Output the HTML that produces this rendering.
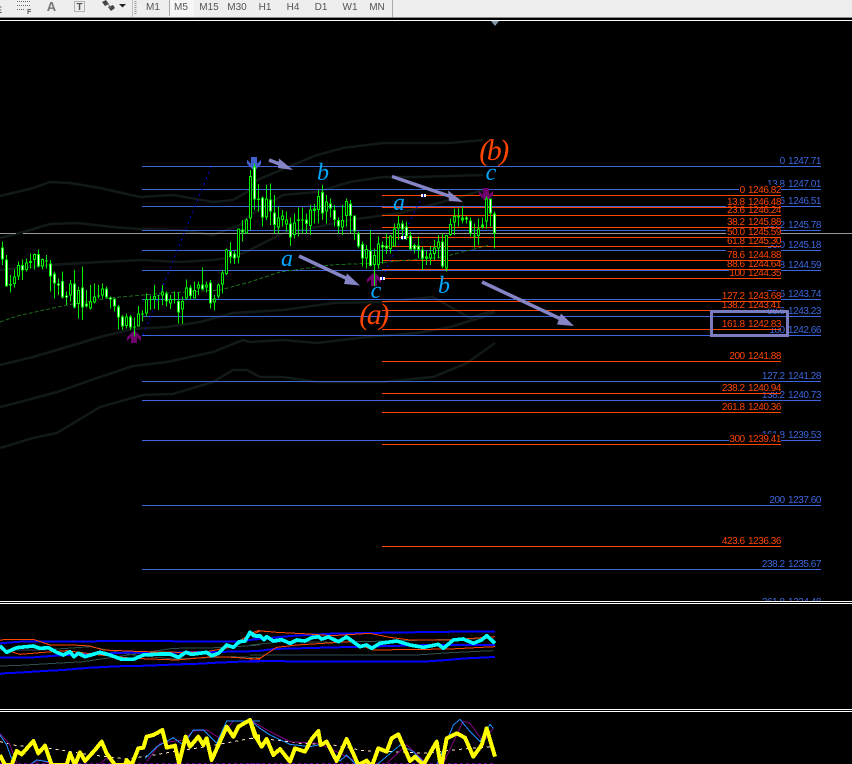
<!DOCTYPE html>
<html><head><meta charset="utf-8"><style>
html,body{margin:0;padding:0;background:#000;width:852px;height:764px;overflow:hidden}
svg{display:block;position:absolute;left:0;top:0}
text{font-family:"Liberation Sans",sans-serif}
.t{font-size:10px;fill:#555;text-anchor:middle}
.bl{font-size:10px;letter-spacing:-.45px;word-spacing:1px;fill:#3d66dc;text-anchor:end}
.rd{font-size:10px;letter-spacing:-.45px;word-spacing:1px;fill:#ff4500;text-anchor:end}
.w{font-family:"Liberation Serif",serif;font-style:italic;font-size:24px;fill:#00a6ff;text-anchor:middle}
.W{font-family:"Liberation Serif",serif;font-style:italic;font-size:30px;letter-spacing:-2.5px;fill:#ff4500;text-anchor:middle}
.f{fill:none;stroke:#111a16;stroke-width:2.5}
</style></head><body>
<svg width="852" height="764" viewBox="0 0 852 764" xmlns="http://www.w3.org/2000/svg">
<rect width="852" height="764" fill="#000"/>
<!-- faint bands -->
<polyline class="f" points="0,196 33,188 50,182 70,183 100,188 140,197 173,195 213,202 233,200 247,192 257,180 293,165 317,155 343,148 383,143 417,143 450,143 483,140"/>
<polyline class="f" points="0,238 20,233 50,224 77,223 113,227 140,229 180,230 213,235 240,225 250,215 283,195 317,192 350,182 383,177 417,177 450,176 483,175"/>
<polyline class="f" points="0,270 20,268 50,265 100,262 143,260 180,262 213,260 233,257 250,250 283,233 317,227 350,220 400,213 450,200 483,190"/>
<polyline class="f" points="0,365 33,357 67,347 100,337 133,329 167,327 200,322 233,313 250,312 283,310 333,303 383,302 433,297 470,318 495,310"/>
<polyline class="f" points="0,407 20,402 57,392 100,377 133,366 167,362 213,352 243,340 250,342 283,340 317,343 367,337 417,333 450,327 483,317 495,312"/>
<polyline class="f" points="0,448 33,438 57,433 100,407 143,395 173,394 213,382 233,370 247,370 260,377 283,377 317,382 383,382 433,377 467,363 495,343"/>
<!-- grey line -->
<rect x="0" y="233" width="16" height="1" fill="#999"/><rect x="23" y="233" width="829" height="1" fill="#999"/>
<!-- blue fib lines -->
<g fill="#3d66dc">
<rect x="142" y="166" width="679" height="1"/><rect x="142" y="189" width="679" height="1"/><rect x="142" y="206" width="679" height="1"/><rect x="142" y="230" width="679" height="1"/><rect x="142" y="250" width="679" height="1"/><rect x="142" y="270" width="679" height="1"/><rect x="142" y="299" width="679" height="1"/><rect x="142" y="316" width="679" height="1"/><rect x="142" y="335" width="679" height="1"/><rect x="142" y="381" width="679" height="1"/><rect x="142" y="400" width="679" height="1"/><rect x="142" y="440" width="679" height="1"/><rect x="142" y="505" width="679" height="1"/><rect x="142" y="569" width="679" height="1"/>
</g>
<g class="lb">
<text class="bl" x="821" y="164">0 1247.71</text>
<text class="bl" x="821" y="187">13.8 1247.01</text>
<text class="bl" x="821" y="204">23.6 1246.51</text>
<text class="bl" x="821" y="228">38.2 1245.78</text>
<text class="bl" x="821" y="248">50.0 1245.18</text>
<text class="bl" x="821" y="268">61.8 1244.59</text>
<text class="bl" x="821" y="297">78.6 1243.74</text>
<text class="bl" x="821" y="314">88.6 1243.23</text>
<text class="bl" x="821" y="333">100 1242.66</text>
<text class="bl" x="821" y="379">127.2 1241.28</text>
<text class="bl" x="821" y="398">138.2 1240.73</text>
<text class="bl" x="821" y="438">161.8 1239.53</text>
<text class="bl" x="821" y="503">200 1237.60</text>
<text class="bl" x="821" y="567">238.2 1235.67</text>
<text class="bl" x="821" y="605">261.8 1234.48</text>
</g>
<!-- red fib: label boxes -->
<g fill="#000">
<rect x="739" y="185" width="42" height="9"/><rect x="726" y="197" width="55" height="9"/><rect x="726" y="206" width="55" height="8"/><rect x="726" y="217" width="55" height="9"/><rect x="726" y="227" width="55" height="9"/><rect x="726" y="236" width="55" height="9"/><rect x="726" y="250" width="55" height="9"/><rect x="726" y="259" width="55" height="9"/><rect x="729" y="268" width="52" height="9"/><rect x="721" y="291" width="60" height="9"/><rect x="721" y="301" width="60" height="8"/><rect x="721" y="319" width="60" height="9"/><rect x="729" y="351" width="52" height="9"/><rect x="721" y="383" width="60" height="9"/><rect x="721" y="402" width="60" height="9"/><rect x="729" y="434" width="52" height="9"/><rect x="721" y="536" width="60" height="9"/>
</g>
<g>
<text class="rd" x="781" y="193">0 1246.82</text>
<text class="rd" x="781" y="205">13.8 1246.48</text>
<text class="rd" x="781" y="213">23.6 1246.24</text>
<text class="rd" x="781" y="225">38.2 1245.88</text>
<text class="rd" x="781" y="235">50.0 1245.59</text>
<text class="rd" x="781" y="244">61.8 1245.30</text>
<text class="rd" x="781" y="258">78.6 1244.88</text>
<text class="rd" x="781" y="267">88.6 1244.64</text>
<text class="rd" x="781" y="276">100 1244.35</text>
<text class="rd" x="781" y="299">127.2 1243.68</text>
<text class="rd" x="781" y="308">138.2 1243.41</text>
<text class="rd" x="781" y="327">161.8 1242.83</text>
<text class="rd" x="781" y="359">200 1241.88</text>
<text class="rd" x="781" y="391">238.2 1240.94</text>
<text class="rd" x="781" y="410">261.8 1240.36</text>
<text class="rd" x="781" y="442">300 1239.41</text>
<text class="rd" x="781" y="544">423.6 1236.36</text>
</g>
<g fill="#ff4500">
<rect x="382" y="195" width="399" height="1"/><rect x="382" y="207" width="399" height="1"/><rect x="382" y="215" width="399" height="1"/><rect x="382" y="227" width="399" height="1"/><rect x="382" y="237" width="399" height="1"/><rect x="382" y="246" width="399" height="1"/><rect x="382" y="260" width="399" height="1"/><rect x="382" y="269" width="399" height="1"/><rect x="382" y="278" width="399" height="1"/><rect x="382" y="301" width="399" height="1"/><rect x="382" y="310" width="399" height="1"/><rect x="382" y="329" width="399" height="1"/><rect x="382" y="361" width="399" height="1"/><rect x="382" y="393" width="399" height="1"/><rect x="382" y="412" width="399" height="1"/><rect x="382" y="444" width="399" height="1"/><rect x="382" y="546" width="399" height="1"/>
</g>
<!-- fib anchor dotted -->
<g fill="none" stroke="#0000d8" stroke-width="1" stroke-dasharray="2 4" shape-rendering="crispEdges">
<line x1="143" y1="335" x2="211" y2="167"/><line x1="382" y1="278" x2="423" y2="195"/>
</g>
<!-- green MA -->
<polyline fill="none" stroke="#1c6a1c" stroke-width="1" stroke-dasharray="4 2" shape-rendering="crispEdges" points="0,322 17,316 67,305 110,298 167,293 220,290 250,282 280,272 330,265 377,263 443,257 490,245"/>
<!-- arrows markers -->
<g shape-rendering="crispEdges">
<path fill="#70006e" d="M134 330L141 337V341L137 337.5V343H131V337.5L127 341V337Z"/>
<path fill="#70006e" d="M374 272L381 279V283L377 279.5V286H371V279.5L367 283V279Z"/>
<path fill="#70006e" d="M486 202L493 195V191L489 194.5V188H483V194.5L479 191V195Z"/>
<path fill="#3f5fcc" d="M254 171L261 164V160L257 163.5V157H251V163.5L247 160V164Z"/>
</g>
<!-- candles left -->
<g transform="translate(0,230) scale(.33334)" fill="none" shape-rendering="crispEdges">
<path stroke="#00ee00" stroke-width="3" d="M7.5 35V105M19.5 75V170M31.5 135V188M43.5 118V172M55.5 95V150M67.5 88V150M79.5 85V125M91.5 70V115M103.5 70V118M115.5 58V112M127.5 85V118M139.5 75V115M151.5 90V185M163.5 125V205M175.5 145V195M187.5 125V205M199.5 185V225M211.5 150V215M223.5 120V235M235.5 170V265M247.5 110V270M259.5 180V232M271.5 165V238M283.5 160V220M295.5 165V205M307.5 160V205M319.5 170V205M331.5 200V235M343.5 205V245M355.5 225V298M367.5 255V300M379.5 250V295M391.5 255V300M403.5 262V320M415.5 228V290M427.5 242V275M439.5 190V260M451.5 197V240M463.5 165V237M475.5 195V240M487.5 165V225M499.5 185V230M511.5 195V237M523.5 185V220M535.5 187V280M547.5 200V282M559.5 148V208M571.5 165V208M583.5 155V205M595.5 155V195M607.5 112V180M619.5 155V188M631.5 150V235M643.5 195V242M655.5 160V205M667.5 120V190M679.5 55V135"/>
<path stroke="#00ee00" stroke-width="9" d="M7.5 52V88M19.5 88V170M31.5 162V167M43.5 140V162M55.5 105V140M67.5 105V122M79.5 97V120M91.5 93V99M103.5 72V90M115.5 72V110M127.5 87V110M139.5 92V95M151.5 100V140M163.5 130V160M175.5 160V167M187.5 153V203M199.5 196V203M211.5 160V197M223.5 160V232M235.5 180V222M247.5 172V232M259.5 220V230M271.5 215V235M283.5 200V217M295.5 196V200M307.5 176V197M319.5 176V203M331.5 203V208M343.5 205V230M355.5 230V262M367.5 260V290M379.5 260V288M391.5 260V292M403.5 290V293M415.5 250V290M427.5 250V253M439.5 207V250M451.5 207V210M463.5 198V208M475.5 195V197M487.5 185V197M499.5 190V215M511.5 207V220M523.5 207V210M535.5 213V247M547.5 213V238M559.5 172V205M571.5 172V198M583.5 180V205M595.5 163V176M607.5 163V178M619.5 163V173M631.5 157V220M643.5 205V217M655.5 163V200M667.5 127V163M679.5 58V132"/>
<path stroke="#fff" stroke-width="3" d="M7.5 55V85M19.5 91V167M67.5 108V119M115.5 75V107M151.5 103V137M163.5 133V157M175.5 162V165M187.5 156V200M199.5 198V201M223.5 163V229M247.5 175V229M259.5 223V227M319.5 179V200M331.5 204V207M343.5 208V227M355.5 233V259M367.5 263V287M391.5 263V289M499.5 193V212M535.5 216V244M571.5 175V195M607.5 166V175M631.5 160V217"/>
<path stroke="#000" stroke-width="3" d="M43.5 143V159M55.5 108V137M79.5 100V117M103.5 75V87M127.5 90V107M211.5 163V194M235.5 183V219M271.5 218V232M283.5 203V214M307.5 179V194M379.5 263V285M415.5 253V287M439.5 210V247M463.5 201V205M487.5 188V194M511.5 210V217M547.5 216V235M559.5 175V202M583.5 183V202M595.5 166V173M619.5 166V170M643.5 208V214M655.5 166V197M667.5 130V160M679.5 61V129"/>
</g>
<!-- candles right -->
<g transform="translate(230,130) scale(.33334)" fill="none" shape-rendering="crispEdges">
<path stroke="#00ee00" stroke-width="3" d="M1.5 336V400M13.5 363V402M25.5 295V400M37.5 270V335M49.5 265V312M61.5 120V300M73.5 100V240M85.5 162V245M97.5 200V290M109.5 165V270M121.5 160V285M133.5 195V310M145.5 230V310M157.5 240V290M169.5 245V305M181.5 262V348M193.5 250V325M205.5 232V320M217.5 232V310M229.5 250V310M241.5 225V315M253.5 222V280M265.5 180V280M277.5 165V270M289.5 195V280M301.5 205V262M313.5 225V290M325.5 262V310M337.5 225V315M349.5 205V290M361.5 210V310M373.5 256V330M385.5 305V355M397.5 335V410M409.5 345V415M421.5 300V410M433.5 355V470M445.5 320V415M457.5 335V400M469.5 310V372M481.5 315V370M493.5 280V350M505.5 258V330M517.5 272V330M529.5 275V330M541.5 305V362M553.5 340V370M565.5 320V385M577.5 350V420M589.5 360V405M601.5 348V405M613.5 330V390M625.5 315V385M637.5 310V415M649.5 315V425M661.5 265V318M673.5 235V315M685.5 235V290M697.5 230V280M709.5 258V280M721.5 262V320M733.5 280V352M745.5 265V345M757.5 262V295M769.5 200V295M781.5 205V290M793.5 245V355"/>
<path stroke="#00ee00" stroke-width="9" d="M1.5 363V381M13.5 370V385M25.5 295V382M37.5 298V308M49.5 268V310M61.5 138V265M73.5 110V208M85.5 205V210M97.5 202V262M109.5 205V262M121.5 208V245M133.5 248V285M145.5 262V292M157.5 256V270M169.5 268V283M181.5 280V322M193.5 278V315M205.5 268V273M217.5 268V271M229.5 268V282M241.5 238V288M253.5 236V243M265.5 198V240M277.5 186V250M289.5 215V245M301.5 220V235M313.5 240V270M325.5 270V290M337.5 270V292M349.5 213V258M361.5 220V258M373.5 256V305M385.5 310V350M397.5 342V385M409.5 357V385M421.5 362V408M433.5 375V405M445.5 340V405M457.5 345V352M469.5 347V355M481.5 316V357M493.5 295V350M505.5 280V295M517.5 280V298M529.5 290V320M541.5 316V358M553.5 345V358M565.5 346V360M577.5 358V385M589.5 380V385M601.5 370V385M613.5 352V372M625.5 335V355M637.5 335V410M649.5 315V415M661.5 282V315M673.5 258V278M685.5 258V262M697.5 262V272M709.5 262V268M721.5 272V310M733.5 316V320M745.5 295V318M757.5 283V292M769.5 205V275M781.5 205V250M793.5 250V310"/>
<path stroke="#fff" stroke-width="3" d="M1.5 366V378M13.5 373V382M37.5 301V305M73.5 113V205M97.5 205V259M121.5 211V242M133.5 251V282M181.5 283V319M229.5 271V279M277.5 189V247M301.5 223V232M313.5 243V267M325.5 273V287M361.5 223V255M373.5 259V302M385.5 313V347M397.5 345V382M421.5 365V405M457.5 347V350M469.5 349V353M517.5 283V295M529.5 293V317M541.5 319V355M553.5 348V355M565.5 349V357M577.5 361V382M637.5 338V407M709.5 264V266M721.5 275V307M781.5 208V247M793.5 253V307"/>
<path stroke="#000" stroke-width="3" d="M25.5 298V379M49.5 271V307M61.5 141V262M109.5 208V259M145.5 265V289M157.5 259V267M169.5 271V280M193.5 281V312M241.5 241V285M265.5 201V237M289.5 218V242M337.5 273V289M349.5 216V255M409.5 360V382M433.5 378V402M445.5 343V402M481.5 319V354M493.5 298V347M505.5 283V292M601.5 373V382M613.5 355V369M625.5 338V352M649.5 318V412M661.5 285V312M673.5 261V275M745.5 298V315M769.5 208V272"/>
</g>
<!-- anchor squares -->
<g shape-rendering="crispEdges">
<rect x="380" y="277" width="5" height="3" fill="#fff"/><rect x="382" y="277" width="1" height="3" fill="#00d"/>
<rect x="421" y="194" width="5" height="3" fill="#fff"/><rect x="423" y="194" width="1" height="3" fill="#00d"/>
<rect x="401" y="236" width="5" height="3" fill="#fff"/><rect x="403" y="236" width="1" height="3" fill="#00d"/>
</g>
<!-- trend arrows -->
<g fill="#8585c5" stroke="#8585c5" stroke-linejoin="miter">
<line x1="269" y1="160" x2="285" y2="166" stroke-width="3.5"/><path stroke="none" d="M293 170L279 158.500L278 168Z"/>
<line x1="392" y1="176.500" x2="452" y2="197" stroke-width="3.500"/><path stroke="none" d="M463 202L448 190.500L449 201Z"/>
<line x1="299" y1="256" x2="350" y2="280" stroke-width="3.500"/><path stroke="none" d="M360 285.500L347 273.500L344 284Z"/>
<line x1="482" y1="282" x2="563" y2="320" stroke-width="3.500"/><path stroke="none" d="M574 326L561 313.500L557 324.500Z"/>
</g>
<rect x="711.5" y="311.5" width="76" height="24" fill="none" stroke="#7b7bc0" stroke-width="3" shape-rendering="crispEdges"/>
<!-- wave labels -->
<text class="w" x="323" y="180">b</text><text class="w" x="491" y="180">c</text><text class="w" x="399" y="210">a</text>
<text class="w" x="287" y="266">a</text><text class="w" x="376" y="298">c</text><text class="w" x="444" y="293">b</text>
<text class="W" x="493" y="160">(b)</text><text class="W" x="373" y="324">(a)</text>
<!-- panels -->
<rect x="0" y="601" width="852" height="163" fill="#000"/>
<rect x="0" y="601" width="852" height="1" fill="#fff"/><rect x="0" y="603" width="852" height="1" fill="#fff"/>
<rect x="0" y="709" width="852" height="1" fill="#fff"/><rect x="0" y="711" width="852" height="1" fill="#fff"/>
<g transform="translate(0,595) scale(.33334)" fill="none" shape-rendering="crispEdges">
<path stroke="#2f4f4f" stroke-width="3" d="M0 213L60 211L130 207L250 200L350 185L520 160L660 158L780 150M0 165L130 165L270 155L400 180L520 192L700 185L780 188"/>
<path stroke="#00f" stroke-width="6" d="M0 237L10 235L70 232L130 228L190 225L270 218L350 214L440 212L540 208L600 206L650 203L720 200L780 199M0 145L60 140L110 140L400 138L720 140L780 130M0 188L100 187L180 181L300 176L400 172L530 172L700 170L780 168"/>
<path stroke="#ff4500" stroke-width="3" d="M0 136L15 133L100 133L150 150L220 150L270 153L310 165L430 170L540 172L620 170L700 155L730 130L780 108M0 160L60 178L120 173L200 167L300 180L400 190L530 195L640 185L700 187L780 193"/>
<path stroke="#0ff" stroke-width="11" stroke-linejoin="round" d="M0 152L20 172L50 158L100 153L120 160L145 158L170 172L190 180L210 170L222 185L235 175L255 185L300 172L330 180L365 193L400 193L430 180L480 177L510 177L535 187L558 172L575 178L620 172L635 182L655 175L680 150L700 157L718 140L735 138L750 112L760 122L780 125"/>
</g>
<g transform="translate(250,595) scale(.33334)" fill="none" shape-rendering="crispEdges">
<path stroke="#2f4f4f" stroke-width="3" d="M0 180L80 180L500 180L600 173L730 167M0 150L100 140L250 142L730 130"/>
<path stroke="#00f" stroke-width="6" d="M0 198L75 198L155 200L520 200L590 195L650 190L735 186M0 135L100 125L135 122L245 116L410 113L615 110L735 110M0 168L25 168L70 162L220 158L540 150L735 150"/>
<path stroke="#ff4500" stroke-width="3" d="M0 115L25 107L80 112L160 116L245 122L360 115L420 127L480 135L600 135L735 125M0 193L30 190L80 157L140 150L300 140L370 165L600 162L735 155"/>
<path stroke="#0ff" stroke-width="11" stroke-linejoin="round" d="M0 112L15 122L30 122L42 134L50 125L70 138L95 134L120 145L140 135L165 138L185 128L205 125L215 132L235 126L265 140L290 126L330 155L350 150L365 160L390 145L440 138L480 150L520 157L565 148L580 160L610 135L640 132L670 145L695 135L710 122L735 145"/>
</g>
<g transform="translate(0,595) scale(.33334)" fill="none" shape-rendering="crispEdges">
<path stroke="#660099" stroke-width="3" stroke-dasharray="9 9" d="M0 505H780"/>
<path stroke="#ffe4c4" stroke-width="3" stroke-dasharray="9 12" d="M0 440L50 452L150 460L260 478L380 492L450 482L520 470L600 458L700 440L780 425"/>
<path stroke="#800080" stroke-width="3" d="M0 415L30 450L50 505M100 505L120 495L150 505M300 505L320 490L345 505M440 500L480 445L550 435L580 408L620 405L660 430L700 378L780 378"/>
<path stroke="#1e90ff" stroke-width="3" d="M0 420L20 450L40 505M95 505L110 495L145 500M435 490L470 455L520 428L550 450L580 405L610 405L650 445L680 378L780 378"/>
<path stroke="#ff0" stroke-width="12" stroke-linejoin="round" d="M0 480L15 510L35 510L50 468L65 478L100 438L115 475L135 452L155 510L200 510L210 475L225 510L240 472L255 498L285 465L305 440L320 475L345 510L375 510L380 495L395 510L415 460L430 458L440 425L460 420L487 405L500 458L525 452L537 505L557 425L570 455L595 425L610 450L620 430L635 495L680 395L700 425L715 395L750 375L765 425L780 425"/>
</g>
<g transform="translate(250,595) scale(.33334)" fill="none" shape-rendering="crispEdges">
<path stroke="#660099" stroke-width="3" stroke-dasharray="9 9" d="M0 505H735"/>
<path stroke="#ffe4c4" stroke-width="3" stroke-dasharray="9 12" d="M0 430L80 435L150 445L250 450L340 467L430 470L520 475L640 462L730 455"/>
<path stroke="#800080" stroke-width="3" d="M0 375L60 410L120 440L200 445L240 460L290 485L330 505M410 505L470 450L530 505M580 505L640 378L660 385L700 440L730 400"/>
<path stroke="#1e90ff" stroke-width="3" d="M0 375L30 400L60 420L120 448L180 455L230 445L270 498L290 480L320 510M380 510L450 450L490 470L530 510M560 510L610 390L630 373L660 410L690 440L720 388L730 400"/>
<path stroke="#ff0" stroke-width="12" stroke-linejoin="round" d="M0 375L20 430L35 455L50 432L70 480L90 462L120 500L135 460L165 470L185 432L205 408L212 450L230 440L260 498L290 432L325 510L350 497L365 515L385 460L410 470L425 430L445 418L480 498L495 485L520 510L560 440L570 500L575 510L590 430L620 415L645 428L670 485L695 450L710 400L735 485"/>
</g>
<!-- toolbar -->
<rect x="0" y="0" width="852" height="17" fill="#eeeeee"/>
<rect x="0" y="17" width="852" height="1" fill="#8a8a8a"/>
<rect x="0" y="18" width="852" height="2" fill="#000"/>
<rect x="0" y="20" width="852" height="1" fill="#fff"/>
<path d="M491 21H499L495 26Z" fill="#8296aa"/>
<rect x="169" y="0" width="25" height="17" fill="#f7f7f7"/>
<rect x="169" y="0" width="1" height="16" fill="#a8a8a8"/>
<rect x="132" y="0" width="1" height="17" fill="#c0c0c0"/>
<path d="M135.5 1V15" stroke="#999" stroke-width="2" stroke-dasharray="1 1" fill="none"/>
<rect x="392" y="0" width="1" height="17" fill="#aaa"/>
<text class="t" x="153" y="10">M1</text><text class="t" x="181" y="10">M5</text><text class="t" x="209" y="10">M15</text><text class="t" x="237" y="10">M30</text><text class="t" x="265" y="10">H1</text><text class="t" x="293" y="10">H4</text><text class="t" x="321" y="10">D1</text><text class="t" x="350" y="10">W1</text><text class="t" x="377" y="10">MN</text>
<text x="-4" y="13" font-size="9" font-weight="bold" fill="#555">E</text>
<path d="M17 1.5H30M17 5.5H30M17 9.5H24" stroke="#666" stroke-dasharray="1 1" fill="none"/>
<text x="27" y="14" font-size="7" font-weight="bold" fill="#555">F</text>
<text x="51.5" y="11" font-size="13" font-weight="bold" fill="#777" text-anchor="middle">A</text>
<rect x="74.5" y="1.5" width="10" height="10" fill="none" stroke="#777" stroke-dasharray="1 1"/>
<text x="79.5" y="10" font-size="10" font-weight="bold" fill="#555" text-anchor="middle">T</text>
<path d="M102 2L106 0L109 4L105 6ZM108 7L113 5L115 8L111 11Z" fill="#444"/>
<path d="M107 3L111 8" stroke="#777" fill="none"/>
<path d="M119 4H126L122.5 7.5Z" fill="#222"/>
</svg>
</body></html>
